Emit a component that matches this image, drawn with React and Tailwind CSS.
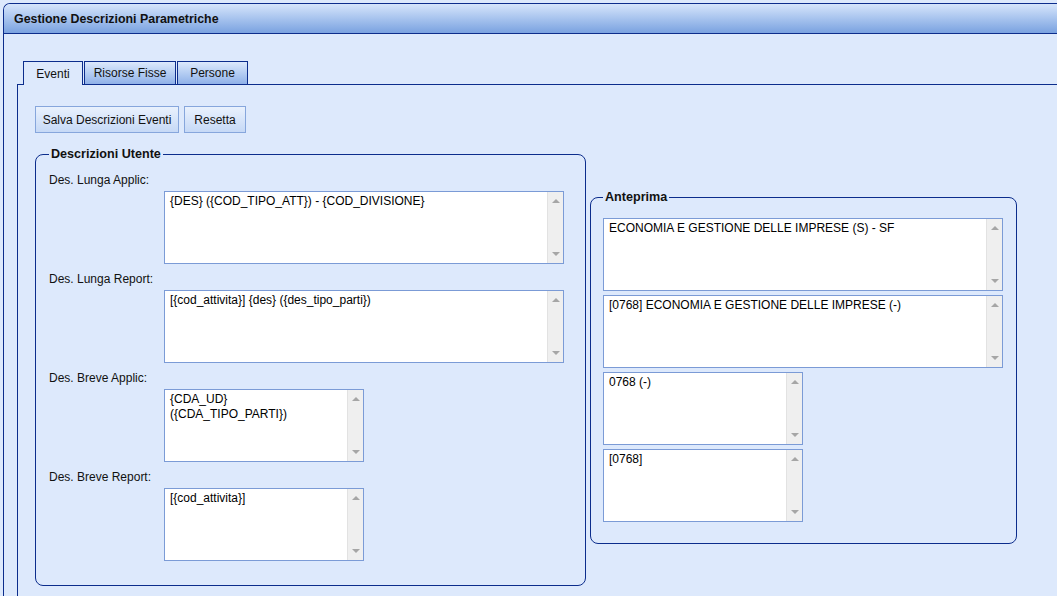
import React from 'react';

const utente = [
  { label: 'Des. Lunga Applic:', value: '{DES} ({COD_TIPO_ATT}) - {COD_DIVISIONE}', wide: true },
  { label: 'Des. Lunga Report:', value: '[{cod_attivita}] {des} ({des_tipo_parti})', wide: true },
  { label: 'Des. Breve Applic:', value: '{CDA_UD}\n({CDA_TIPO_PARTI})', wide: false },
  { label: 'Des. Breve Report:', value: '[{cod_attivita}]', wide: false },
];

const anteprima = [
  { value: 'ECONOMIA E GESTIONE DELLE IMPRESE (S) - SF', wide: true },
  { value: '[0768] ECONOMIA E GESTIONE DELLE IMPRESE (-)', wide: true },
  { value: '0768 (-)', wide: false },
  { value: '[0768]', wide: false },
];

function ScrollBar() {
  return (
    <div className="w-[16px] shrink-0 bg-[#efefef] border-l border-[#e2e2e2] flex flex-col items-center justify-between py-[7px]">
      <div className="w-0 h-0 border-x-[4px] border-x-transparent border-b-[4px] border-b-[#a6a6a6]" />
      <div className="w-0 h-0 border-x-[4px] border-x-transparent border-t-[4px] border-t-[#a6a6a6]" />
    </div>
  );
}

function Area({ value, wide }) {
  return (
    <div className={`${wide ? 'w-[400px]' : 'w-[200px]'} h-[73px] flex border border-[#7b9bd6] bg-white`}>
      <textarea
        defaultValue={value}
        className="flex-1 resize-none overflow-hidden outline-none bg-white text-black text-[12px] leading-[15px] pl-[5px] pt-[2px] font-['Liberation_Sans',Arial,sans-serif]"
      />
      <ScrollBar />
    </div>
  );
}

function Tab({ label, active, width }) {
  return (
    <div
      className={`${width} h-[24px] -mb-[1px] relative z-10 flex items-center justify-center border border-[#0c2d8c] ${
        active ? 'border-b-0 bg-[#dde9fc]' : 'bg-gradient-to-b from-[#dce9fc] to-[#8fb1e8]'
      } text-[12px] text-[#111]`}
    >
      {label}
    </div>
  );
}

export default function App() {
  return (
    <div className="w-[1057px] h-[596px] overflow-hidden bg-[#dde9fc] text-[12px] text-[#111] font-['Liberation_Sans',Arial,sans-serif] pl-[3px] pt-[3px]">
      <div className="w-[1080px] h-[620px] border-l border-t border-[#0c2d8c] rounded-tl-[7px] bg-[#dde9fc] flex flex-col">
        <div className="h-[30px] shrink-0 rounded-tl-[6px] border-b border-[#0c2d8c] bg-gradient-to-b from-[#d6e5fb] to-[#7aa2e0] flex items-center pl-[10px] pt-[1px] font-bold text-[12.4px]">
          Gestione Descrizioni Parametriche
        </div>

        <div className="pl-[13px] pt-[27px] flex-1 flex flex-col">
          <div className="flex gap-[1px] pl-[6px]">
            <Tab label="Eventi" active width="w-[60px]" />
            <Tab label="Risorse Fisse" width="w-[92px]" />
            <Tab label="Persone" width="w-[71px]" />
          </div>

          <div className="flex-1 border-l border-t border-[#0c2d8c] pl-[17px] pt-[21px]">
            <div className="flex gap-[5px]">
              <button className="h-[27px] w-[144px] border border-[#86a6dc] bg-gradient-to-b from-[#e9f1fd] to-[#c6d9f6] text-[12px] text-[#111]">
                Salva Descrizioni Eventi
              </button>
              <button className="h-[27px] w-[62px] border border-[#86a6dc] bg-gradient-to-b from-[#e9f1fd] to-[#c6d9f6] text-[12px] text-[#111]">
                Resetta
              </button>
            </div>

            <div className="flex items-center gap-[4px] mt-[14px]">
              <fieldset className="w-[551px] border border-[#0c2d8c] rounded-[8px] px-[13px] pt-[11px] pb-[24px]">
                <legend className="px-[2px] font-bold text-[12.6px] leading-[15px]">Descrizioni Utente</legend>
                {utente.map((u) => (
                  <div key={u.label} className="mb-[8px] last:mb-0">
                    <div className="leading-[15px] mb-[3px]">{u.label}</div>
                    <div className="ml-[115px]">
                      <Area value={u.value} wide={u.wide} />
                    </div>
                  </div>
                ))}
              </fieldset>

              <fieldset className="w-[427px] border border-[#0c2d8c] rounded-[8px] px-[12px] pt-[13px] pb-[21px]">
                <legend className="px-[2px] font-bold text-[12.6px] leading-[15px]">Anteprima</legend>
                <div className="flex flex-col gap-[4px]">
                  {anteprima.map((a) => (
                    <Area key={a.value} value={a.value} wide={a.wide} />
                  ))}
                </div>
              </fieldset>
            </div>
          </div>
        </div>
      </div>
    </div>
  );
}
